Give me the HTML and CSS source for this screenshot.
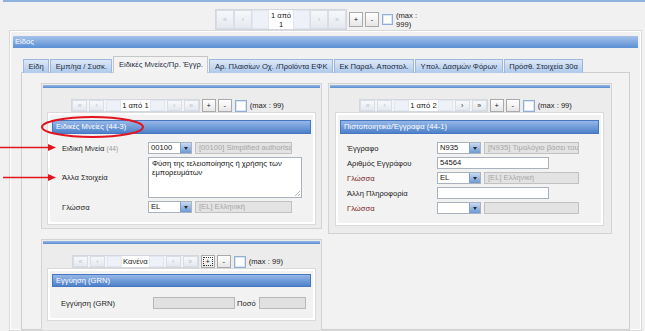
FILE: index.html
```html
<!DOCTYPE html>
<html>

<head>
    <meta charset="utf-8">
    <link rel="stylesheet" href="styles.css">
</head>

<body>
    <div class="topline"></div>

    <div class="toolbar">
        <div class="pager big">
            <div class="nav">
                <span class="pbtn off">&laquo;</span>
                <span class="pbtn off">&lsaquo;</span>
                <span class="pbox"></span>
                <span class="pinfo">1 από 1</span>
                <span class="pbox"></span>
                <span class="pbtn off">&rsaquo;</span>
                <span class="pbtn off">&raquo;</span>
            </div>
            <span class="act">+</span>
            <span class="act">-</span>
            <span class="chk"></span>
            <span class="max">(max : 999)</span>
        </div>
    </div>

    <div class="frame">
        <div class="frame-head">Είδος</div>

        <div class="tabs">
            <span class="tab">Είδη</span>
            <span class="tab">Εμπ/ηα / Συσκ.</span>
            <span class="tab on">Ειδικές Μνείες/Πρ. Έγγρ.</span>
            <span class="tab">Αρ. Πλαισίων Οχ. /Προϊόντα ΕΦΚ</span>
            <span class="tab">Εκ Παραλ. Αποστολ.</span>
            <span class="tab">Υπολ. Δασμών Φόρων</span>
            <span class="tab">Πρόσθ. Στοιχεία 30α</span>
        </div>

        <div class="tab-body">
            <div class="left-col">

                <!-- ειδικες μνειες -->
                <div class="group">
                    <div class="group-bar"></div>
                    <div class="pager-row">
                        <div class="pager">
                            <div class="nav">
                                <span class="pbtn off">&laquo;</span>
                                <span class="pbtn off">&lsaquo;</span>
                                <span class="pbox"></span>
                                <span class="pinfo">1 από 1</span>
                                <span class="pbox"></span>
                                <span class="pbtn off">&rsaquo;</span>
                                <span class="pbtn off">&raquo;</span>
                            </div>
                            <span class="act">+</span>
                            <span class="act">-</span>
                            <span class="chk"></span>
                            <span class="max">(max : 99)</span>
                        </div>
                    </div>
                    <div class="panel">
                        <div class="panel-head">Ειδικές Μνείες (44-3)</div>
                        <div class="form form-left">
                            <label>Ειδική Μνεία <small>(44)</small></label>
                            <div class="fields">
                                <span class="sel"><span class="sel-text">00100</span><span class="sel-btn"></span></span>
                                <span class="dis w97">[00100] Simplified authorisati</span>
                            </div>

                            <label>Άλλα Στοιχεία</label>
                            <div class="fields">
                                <div class="textarea">Φύση της τελειοποίησης ή χρήσης των εμπορευμάτων</div>
                            </div>

                            <label>Γλώσσα</label>
                            <div class="fields">
                                <span class="sel"><span class="sel-text">EL</span><span class="sel-btn"></span></span>
                                <span class="dis w97">[EL] Ελληνική</span>
                            </div>
                        </div>
                    </div>
                </div>

                <!-- εγγυηση -->
                <div class="group second">
                    <div class="group-bar"></div>
                    <div class="pager-row">
                        <div class="pager">
                            <div class="nav">
                                <span class="pbtn off">&laquo;</span>
                                <span class="pbtn off">&lsaquo;</span>
                                <span class="pbox"></span>
                                <span class="pinfo">Κανένα</span>
                                <span class="pbox"></span>
                                <span class="pbtn off">&rsaquo;</span>
                                <span class="pbtn off">&raquo;</span>
                            </div>
                            <span class="act focus">+</span>
                            <span class="act">-</span>
                            <span class="chk"></span>
                            <span class="max">(max : 99)</span>
                        </div>
                    </div>
                    <div class="panel">
                        <div class="panel-head small">Εγγύηση (GRN)</div>
                        <div class="grn-row">
                            <label class="grn-label">Εγγύηση (GRN)</label>
                            <span class="dis w82"></span>
                            <label class="poso">Ποσό</label>
                            <span class="dis w47"></span>
                        </div>
                    </div>
                </div>
            </div>

            <!-- πιστοποιητικα -->
            <div class="group right">
                <div class="group-bar"></div>
                <div class="pager-row">
                    <div class="pager">
                        <div class="nav">
                            <span class="pbtn off">&laquo;</span>
                            <span class="pbtn off">&lsaquo;</span>
                            <span class="pbox"></span>
                            <span class="pinfo">1 από 2</span>
                            <span class="pbox"></span>
                            <span class="pbtn">&rsaquo;</span>
                            <span class="pbtn">&raquo;</span>
                        </div>
                        <span class="act">+</span>
                        <span class="act">-</span>
                        <span class="chk"></span>
                        <span class="max">(max : 99)</span>
                    </div>
                </div>
                <div class="panel">
                    <div class="panel-head">Πιστοποιητικά/Έγγραφα (44-1)</div>
                    <div class="form form-right">
                        <label>Έγγραφο</label>
                        <div class="fields">
                            <span class="sel"><span class="sel-text">N935</span><span class="sel-btn"></span></span>
                            <span class="dis w95">[N935] Τιμολόγιο βάσει του στ</span>
                        </div>

                        <label>Αριθμός Εγγράφου</label>
                        <div class="fields">
                            <span class="txt w112">54564</span>
                        </div>

                        <label class="req">Γλώσσα</label>
                        <div class="fields">
                            <span class="sel"><span class="sel-text">EL</span><span class="sel-btn"></span></span>
                            <span class="dis w95">[EL] Ελληνική</span>
                        </div>

                        <label>Άλλη Πληροφορία</label>
                        <div class="fields">
                            <span class="txt w112"></span>
                        </div>

                        <label class="req">Γλώσσα</label>
                        <div class="fields">
                            <span class="sel"><span class="sel-text"></span><span class="sel-btn"></span></span>
                            <span class="dis w95"></span>
                        </div>
                    </div>
                </div>
            </div>
        </div>
    </div>

    <!-- σημειωσεις με κοκκινο -->
    <svg class="marks" width="645" height="331" viewBox="0 0 645 331">
        <ellipse cx="92.5" cy="127" rx="50.5" ry="10" fill="none" stroke="#e3141d" stroke-width="2" />
        <line x1="0" y1="147.5" x2="50" y2="147.5" stroke="#e3141d" stroke-width="1.5" />
        <polygon points="48,144 56,147.5 48,151" fill="#e3141d" />
        <line x1="3" y1="177.5" x2="50" y2="177.5" stroke="#e3141d" stroke-width="1.5" />
        <polygon points="48,174 56,177.5 48,181" fill="#e3141d" />
    </svg>
</body>

</html>
```

FILE: styles.css
```css
* {
    box-sizing: border-box;
}

body {
    margin: 0;
    width: 645px;
    height: 331px;
    overflow: hidden;
    position: relative;
    background-color: #f1f1f1;
    font-family: "Liberation Sans", Arial, sans-serif;
    font-size: 7.6px;
    color: #222;
}

.topline {
    height: 2px;
    margin-left: 3px;
    background-color: #8fb1de;
}

.toolbar {
    height: 28px;
    padding: 7px 0 0 215px;
}

/* pager */

.pager-row {
    display: flex;
    justify-content: center;
    padding-right: 8px;
    margin-top: 11px;
    margin-bottom: 1px;
}

.pager {
    display: flex;
    align-items: center;
    height: 13px;
}

.nav {
    display: flex;
    height: 13px;
    border: 1px solid #d3d8e0;
    background-color: #f3f4f6;
}

.pbtn {
    width: 15px;
    margin-right: 2px;
    border: 1px solid #d9dee6;
    background: linear-gradient(#f7f8fa, #e5e9ef);
    text-align: center;
    line-height: 10px;
    font-size: 7px;
    color: #333;
}

.pbtn.off {
    color: #b9c3d1;
}

.nav .pbtn:last-child {
    margin-right: 0;
}

.pbox {
    width: 15px;
    background-color: #eef1f8;
    border: 1px solid #e2e6ee;
}

.pinfo {
    min-width: 26px;
    padding: 0 1px;
    background-color: #fff;
    text-align: center;
    line-height: 11px;
    white-space: nowrap;
}

.nav .pinfo + .pbox {
    margin-right: 2px;
}

.act {
    width: 14px;
    height: 13px;
    margin-left: 2px;
    border: 1px solid #a9a9a9;
    background: linear-gradient(#fff, #e6e6e6);
    text-align: center;
    line-height: 11px;
    color: #222;
}

.act.focus {
    outline: 1px dotted #333;
    outline-offset: -3px;
}

.chk {
    width: 12px;
    height: 12px;
    margin-left: 3px;
    border: 1px solid #93aed4;
    background-color: #fff;
    box-shadow: inset 0 0 0 1px #dbe5f3;
}

.max {
    margin-left: 3px;
    white-space: nowrap;
}

.pager.big,
.pager.big .nav {
    height: 21px;
}

.pager.big .pbtn {
    width: 18px;
    margin-right: 0;
    line-height: 18px;
}

.pager.big .pbox {
    width: 17px;
}

.pager.big .pinfo {
    min-width: 0;
    width: 24px;
    white-space: normal;
    line-height: 9px;
    padding-top: 1px;
}

.pager.big .nav .pinfo + .pbox {
    margin-right: 0;
}

.pager.big .act {
    height: 15px;
    line-height: 13px;
}

.pager.big .chk {
    width: 11px;
    height: 11px;
}

.pager.big .max {
    width: 26px;
    white-space: normal;
    line-height: 9px;
}

/* frame */

.frame {
    margin: 0 3px 0 9px;
    height: 301px;
    overflow: hidden;
    border: 1px solid #d9d9d9;
    box-shadow: inset 0 0 0 1px #fff;
    padding: 5px 3px 0 3px;
}

.frame-head {
    height: 12px;
    line-height: 12px;
    padding-left: 2px;
    color: #fff;
    background: linear-gradient(#a6c3ea, #5b8fd5);
}

.tabs {
    display: flex;
    align-items: flex-end;
    height: 16px;
    margin: 9px 8px -1px 8px;
    padding-left: 2px;
    position: relative;
    z-index: 1;
}

.tab {
    height: 14px;
    padding: 0 4.5px;
    margin-right: 1px;
    line-height: 13px;
    border: 1px solid #9db8dc;
    border-bottom: none;
    background: linear-gradient(#dbe7f7, #afcaec);
    color: #1b2a3d;
    white-space: nowrap;
}

.tab.on {
    height: 17px;
    line-height: 15px;
    border-color: #c6c6c6;
    background: #f3f3f3;
}

.tab-body {
    display: grid;
    grid-template-columns: 281px 284px;
    column-gap: 6px;
    align-items: start;
    height: 258px;
    margin: 0 8px;
    padding: 10px 17px 0 19px;
    border: 1px solid #cfcfcf;
    background-color: #f2f2f2;
}

/* groups */

.group {
    border: 1px solid #d3d3d3;
    background-color: #ececec;
    padding: 1px 6px 4px 6px;
}

.group.second {
    margin-top: 10px;
    height: 100px;
}

.group.right {
    padding: 1px 8px 8px 7px;
}

.group-bar {
    height: 3px;
    margin: 0 -5px;
    background: linear-gradient(#97bae8, #5a8bd0);
}

.group.right .group-bar {
    margin: 0 -7px 0 -6px;
}

.panel {
    border: 2px solid #fff;
    outline: 1px solid #dadada;
    background-color: #f2f2f2;
    padding: 5px 2px 9px 2px;
}

.group.second .panel {
    padding-top: 3px;
}

.panel-head {
    height: 14px;
    line-height: 12px;
    padding-left: 3px;
    color: #fff;
    border: 1px solid #4677c0;
    background: linear-gradient(#95b7e7, #4e81ca);
}

.panel-head.small {
    height: 13px;
    line-height: 11px;
}

/* form rows */

.form {
    display: grid;
    row-gap: 3px;
    align-items: center;
    margin-top: 8px;
}

.form-left {
    grid-template-columns: 86px auto;
    padding-left: 10px;
}

.form-right {
    grid-template-columns: 90px auto;
    padding-left: 7px;
}

.form label small {
    font-size: 6.5px;
    color: #999;
}

.form label.req {
    color: #7a1f1f;
}

.fields {
    display: flex;
    gap: 3px;
}

.sel {
    display: flex;
    width: 44px;
    height: 12px;
    border: 1px solid #a9b2bd;
    background-color: #fff;
}

.sel-text {
    flex: 1;
    padding-left: 2px;
    line-height: 10px;
    color: #111;
}

.sel-btn {
    width: 11px;
    display: flex;
    align-items: center;
    justify-content: center;
    border-left: 1px solid #7f9ec8;
    background: linear-gradient(#c9dbf2, #6b98d5);
}

.sel-btn::after {
    content: "";
    border-top: 3px solid #2b2b2b;
    border-left: 2px solid transparent;
    border-right: 2px solid transparent;
}

.dis {
    height: 12px;
    padding-left: 3px;
    line-height: 10px;
    border: 1px solid #c1c1c1;
    background-color: #e3e3e3;
    color: #a6a6a6;
    white-space: nowrap;
    overflow: hidden;
}

.txt {
    height: 12px;
    padding-left: 2px;
    line-height: 10px;
    border: 1px solid #a9b2bd;
    background-color: #fff;
    color: #111;
}

.w97 { width: 97px; }
.w95 { width: 95px; }
.w112 { width: 112px; }
.w82 { width: 82px; }
.w47 { width: 47px; }

.textarea {
    width: 154px;
    height: 41px;
    padding: 1px 3px;
    line-height: 9px;
    border: 1px solid #a9b2bd;
    background-color: #fff;
    color: #111;
    position: relative;
}

.textarea::after {
    content: "";
    position: absolute;
    right: 1px;
    bottom: 1px;
    width: 5px;
    height: 5px;
    background: linear-gradient(135deg, transparent 45%, #bbb 45%, #bbb 55%, transparent 55%, transparent 70%, #bbb 70%, #bbb 80%, transparent 80%);
}

.grn-row {
    display: flex;
    align-items: center;
    margin-top: 10px;
    padding-left: 9px;
}

.grn-label {
    width: 92px;
}

.grn-row .dis {
    background-color: #e1e1e1;
    border-color: #b8b8b8;
}

.poso {
    margin: 0 3px 0 2px;
}

.marks {
    position: absolute;
    top: 0;
    left: 0;
    pointer-events: none;
}
```
